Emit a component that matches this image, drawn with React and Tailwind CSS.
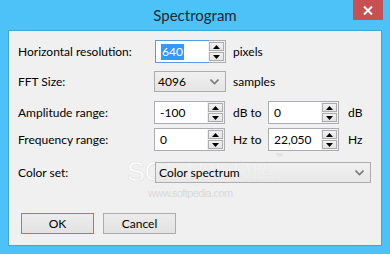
import React from 'react';

const font = { fontFamily: 'Lato, "Noto Sans", sans-serif' };

const Arrow = ({ up }) => (
  <svg width="7" height="4" viewBox="0 0 7 4">
    {up ? <path d="M0 4 L3.5 0 L7 4 Z" fill="#000" /> : <path d="M0 0 L7 0 L3.5 4 Z" fill="#000" />}
  </svg>
);

const SpinBox = ({ value, focused }) => (
  <div className="flex h-[23px] w-[71px] border border-[#abadb3] bg-white">
    <div
      className={`flex-1 flex items-center pl-[5px] ${
        focused ? '-m-px border border-[#569de5]' : ''
      }`}
    >
      {focused ? (
        <span className="bg-[#3399ff] text-white leading-[16px] px-px">{value}</span>
      ) : (
        <span>{value}</span>
      )}
    </div>
    <div className="flex flex-col w-[17px] p-px gap-px bg-[#f0f0f0]">
      <div className="flex-1 flex items-center justify-center border border-[#adadad] bg-gradient-to-b from-[#f2f2f2] to-[#e2e2e2]">
        <Arrow up />
      </div>
      <div className="flex-1 flex items-center justify-center border border-[#adadad] bg-gradient-to-b from-[#f2f2f2] to-[#e2e2e2]">
        <Arrow />
      </div>
    </div>
  </div>
);

const Chevron = () => (
  <svg width="9" height="6" viewBox="0 0 9 6">
    <path d="M0.5 0.5 L4.5 4.5 L8.5 0.5" fill="none" stroke="#7a7a7a" strokeWidth="1.6" />
  </svg>
);

const Combo = ({ value, width }) => (
  <div
    className={`flex items-center justify-between h-[21px] ${width} border border-[#acacac] bg-gradient-to-b from-[#f0f0f0] to-[#e5e5e5] pl-[3px] pr-[6px]`}
  >
    <span>{value}</span>
    <Chevron />
  </div>
);

const Label = ({ children }) => <div className="w-[136px] shrink-0">{children}</div>;

export default function App() {
  return (
    <div
      className="w-[390px] h-[254px] bg-[#4cc2f9] flex flex-col text-[12px] text-black overflow-hidden"
      style={font}
    >
      {/* title bar */}
      <div className="relative h-[30px] flex items-center justify-center shrink-0">
        <span className="text-[15px] text-[#1f2a36] pt-[1px]">Spectrogram</span>
        <div className="absolute right-[7px] top-0 w-[30px] h-[20px] bg-[#c75050] flex items-center justify-center">
          <svg width="10" height="9" viewBox="0 0 10 9">
            <path d="M1 0.5 L9 8.5 M9 0.5 L1 8.5" stroke="#fff" strokeWidth="2" />
          </svg>
        </div>
      </div>

      {/* client area */}
      <div className="relative mx-[8px] h-[216px] bg-[#f0f0f0] border border-[#3ba7d8] flex flex-col pl-[9px] pt-[9px]">
        {/* watermark */}
        <div
          className="absolute left-[118px] top-[128px] text-[27px] tracking-[-0.5px] text-white leading-none pointer-events-none select-none"
          style={{ WebkitTextStroke: '0.6px #e0e0e0', fontFamily: '"Liberation Sans", sans-serif' }}
        >
          SOFTPEDIA<sup className="text-[7px] align-top">™</sup>
        </div>
        <div
          className="absolute left-[139px] top-[154px] text-[11px] tracking-[-0.6px] text-[#dadada] pointer-events-none select-none"
          style={{ fontFamily: '"Liberation Sans", sans-serif' }}
        >
          www.softpedia.com
        </div>

        <div className="relative flex items-center h-[23px]">
          <Label>Horizontal resolution:</Label>
          <div className="ml-[1px]">
            <SpinBox value="640" focused />
          </div>
          <span className="ml-[7px]">pixels</span>
        </div>

        <div className="relative flex items-center h-[21px] mt-[8px]">
          <Label>FFT Size:</Label>
          <Combo value="4096" width="w-[72px]" />
          <span className="ml-[7px]">samples</span>
        </div>

        <div className="relative flex items-center h-[23px] mt-[9px]">
          <Label>Amplitude range:</Label>
          <SpinBox value="-100" />
          <span className="ml-[8px] w-[35px]">dB to</span>
          <SpinBox value="0" />
          <span className="ml-[9px]">dB</span>
        </div>

        <div className="relative flex items-center h-[23px] mt-[4px]">
          <Label>Frequency range:</Label>
          <SpinBox value="0" />
          <span className="ml-[8px] w-[35px]">Hz to</span>
          <SpinBox value="22,050" />
          <span className="ml-[9px]">Hz</span>
        </div>

        <div className="relative flex items-center h-[21px] mt-[11px]">
          <Label>Color set:</Label>
          <div className="ml-[1px] relative">
            <Combo value="Color spectrum" width="w-[216px] bg-transparent from-[#f0f0f0]/70 to-[#e5e5e5]/70" />
          </div>
        </div>

        <div className="relative flex gap-[9px] mt-[30px] ml-[3px]">
          <button className="w-[73px] h-[21px] border border-[#3399ff] bg-gradient-to-b from-[#ececec] to-[#e2e2e2] flex items-center justify-center">
            OK
          </button>
          <button className="w-[73px] h-[21px] border border-[#acacac] bg-gradient-to-b from-[#ececec] to-[#e2e2e2] flex items-center justify-center">
            Cancel
          </button>
        </div>
      </div>
    </div>
  );
}
